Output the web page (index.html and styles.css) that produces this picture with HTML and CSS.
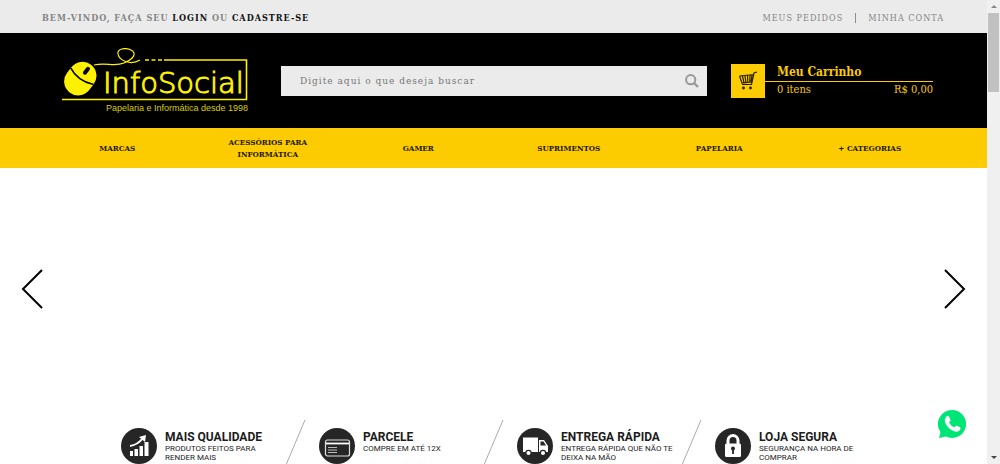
FILE: index.html
```html
<!DOCTYPE html>
<html lang="pt-BR">
<head>
<meta charset="utf-8">
<meta name="viewport" content="width=device-width, initial-scale=1">
<title>InfoSocial</title>
<link rel="stylesheet" href="styles.css">
</head>
<body>
<div class="topbar">
  <p class="welcome">BEM-VINDO, FAÇA SEU <a href="#">LOGIN</a> OU <a href="#">CADASTRE-SE</a></p>
  <nav class="account"><a href="#">MEUS PEDIDOS</a><span class="bar"></span><a href="#">MINHA CONTA</a></nav>
</div>
<header class="header">
  <a class="logo" href="#" aria-label="InfoSocial">
    <svg viewBox="0 0 188 66" width="188" height="66">
      <g fill="none" stroke="#fdf100" stroke-width="1.6">
        <path d="M0 51.500H184.500V12H102"/>
        <path d="M83 12h4M89.500 12h4M96 12h4"/>
        <path stroke-width="1.200" d="M32 17C44 14 52 19 62 15C72 11 75 5 69 2C63-1 55 1 56 6C57 12 68 18 78 12"/>
      </g>
      <g transform="rotate(38 18 31)">
        <rect x="4" y="13" width="28" height="35" rx="14" fill="#fdf100"/>
        <path d="M4 28Q17 34 32 27" fill="none" stroke="#000" stroke-width="1.600"/>
        <rect x="16" y="16" width="4" height="9" rx="2" fill="#000"/>
      </g>
      <text class="logo-name" x="41" y="45">InfoSocial</text>
      <text class="logo-tag" x="44" y="63">Papelaria e Informática desde 1998</text>
    </svg>
  </a>
  <form class="search" role="search">
    <input type="text" aria-label="Buscar" placeholder="Digite aqui o que deseja buscar">
    <button type="button" aria-label="Buscar">
      <svg viewBox="0 0 14 14" width="14" height="14" fill="none" stroke="#999" stroke-width="2"><circle cx="5.700" cy="5.700" r="4.600"/><path d="M9 9l4 4" stroke-width="2.400"/></svg>
    </button>
  </form>
  <a class="cart" href="#">
    <span class="cart-icon">
      <svg viewBox="0 0 20 20" width="20" height="20" fill="none" stroke="#2b2100" stroke-width="1.200"><path d="M19 1l-3 1-2.500 11.500H4M1.500 5L16 3.500M1.500 5L4 12L14 11M4.500 5l1.500 7M7 5l1 7M9.500 4.500l.3 7M12 4.500l-.3 7M14 4l-1 7"/><circle cx="5.500" cy="17" r=".8" fill="#2b2100"/><circle cx="12.500" cy="17" r=".8" fill="#2b2100"/></svg>
    </span>
    <span class="cart-info">
      <strong>Meu Carrinho</strong>
      <span class="cart-row"><span>0 itens</span><span>R$ 0,00</span></span>
    </span>
  </a>
</header>
<nav class="menu">
  <a href="#">MARCAS</a>
  <a href="#">ACESSÓRIOS PARA INFORMÁTICA</a>
  <a href="#">GAMER</a>
  <a href="#">SUPRIMENTOS</a>
  <a href="#">PAPELARIA</a>
  <a href="#">+ CATEGORIAS</a>
</nav>
<main>
  <section class="banner">
    <button type="button" aria-label="Anterior"><svg viewBox="0 0 22 40" width="22" height="40"><path d="M21 1L2 20l19 19"/></svg></button>
    <button type="button" aria-label="Próximo"><svg viewBox="0 0 22 40" width="22" height="40"><path d="M1 1l19 19L1 39"/></svg></button>
  </section>
  <section class="features">
    <article class="feature">
      <svg class="badge" viewBox="0 0 36 36" width="36" height="36"><circle cx="18" cy="18" r="18" fill="#262626"/><path d="M9 23h3v5H9zM13.500 21h3.500v7h-3.500zM18.500 18h3.500v10h-3.500zM23.500 14h4v14h-4z" fill="#fff"/><path d="M9 18C15 17 19 14 22 10" fill="none" stroke="#fff" stroke-width="2"/><path d="M18 9l7-2-1 7z" fill="#fff"/></svg>
      <div><h2>MAIS QUALIDADE</h2><p>PRODUTOS FEITOS PARA RENDER MAIS</p></div>
    </article>
    <svg class="slash" viewBox="0 0 23 52" width="23" height="52"><path d="M22 0L0 52"/></svg>
    <article class="feature">
      <svg class="badge" viewBox="0 0 36 36" width="36" height="36"><circle cx="18" cy="18" r="18" fill="#262626"/><rect x="6.500" y="12" width="24" height="16" rx="2" fill="none" stroke="#ddd" stroke-width="1.200"/><path d="M7 15.500h23" stroke="#fff" stroke-width="1.800"/><path d="M9 19.500h9M9 22h9M9 24.500h9" stroke="#bbb" stroke-width="1.200"/></svg>
      <div><h2>PARCELE</h2><p>COMPRE EM ATÉ 12X</p></div>
    </article>
    <svg class="slash" viewBox="0 0 23 52" width="23" height="52"><path d="M22 0L0 52"/></svg>
    <article class="feature">
      <svg class="badge" viewBox="0 0 36 36" width="36" height="36"><circle cx="18" cy="18" r="18" fill="#262626"/><path d="M6 9.500h15V24H6zM22 12h5l4 6v6h-9z" fill="#fff"/><path d="M23.500 13.500h3l2.500 4h-5.500z" fill="#262626"/><g fill="#fff" stroke="#262626" stroke-width="1.300"><circle cx="11.500" cy="25" r="2.700"/><circle cx="26" cy="25" r="2.700"/></g></svg>
      <div><h2>ENTREGA RÁPIDA</h2><p>ENTREGA RÁPIDA QUE NÃO TE DEIXA NA MÃO</p></div>
    </article>
    <svg class="slash" viewBox="0 0 23 52" width="23" height="52"><path d="M22 0L0 52"/></svg>
    <article class="feature">
      <svg class="badge" viewBox="0 0 36 36" width="36" height="36"><circle cx="18" cy="18" r="18" fill="#262626"/><rect x="10" y="15.500" width="16" height="13.500" rx="1.500" fill="#fff"/><path d="M13 16v-3.500a5 5 0 0 1 10 0V16" fill="none" stroke="#fff" stroke-width="3"/><circle cx="18" cy="20.500" r="2" fill="#262626"/><path d="M18 21v5" stroke="#262626" stroke-width="1.800"/></svg>
      <div><h2>LOJA SEGURA</h2><p>SEGURANÇA NA HORA DE COMPRAR</p></div>
    </article>
  </section>
</main>
<a class="whatsapp" href="#" aria-label="WhatsApp">
  <svg viewBox="0 0 28 28" width="28" height="28"><path d="M14 0a14 14 0 1 1-6 26.600L1 28l1.500-6A14 14 0 0 1 14 0z" fill="#00e676"/><path d="M8.500 6.500c1-1 2-1 2.600.2l1.300 3c.3.900-.1 1.500-1.400 2.800 1.200 2.300 3 3.900 5.400 5 1.200-1.600 1.700-2.100 2.600-1.700l2.900 1.500c1 .5.600 2.200-.4 3.300-1.300 1.300-3.500 1.500-6 .5-4-1.600-7-5-8.300-8.300-.9-2.600-.2-4.900 1.300-6.300z" fill="#fff"/></svg>
</a>
<div class="scrollbar" aria-hidden="true"><span class="up"></span><span class="thumb"></span><span class="down"></span></div>
</body>
</html>
```
FILE: styles.css
```css
* { box-sizing: border-box; }
body {
  margin: 0;
  padding-right: 13px;
  height: 100vh;
  overflow: hidden;
  background: #fff;
  font-family: "Roboto Slab", "DejaVu Serif Condensed", "DejaVu Serif", serif;
}
a { color: inherit; text-decoration: none; }
p, h2 { margin: 0; }
button { border: 0; padding: 0; background: none; display: flex; }
svg { display: block; flex: none; }

.topbar {
  display: flex;
  justify-content: space-between;
  align-items: center;
  height: 33px;
  padding: 2px 43px 0 42px;
  background: #ebebeb;
  color: #858585;
  font-size: 9px;
  letter-spacing: 1px;
}
.welcome { font-weight: bold; }
.welcome a { color: #111; }
.account { display: flex; align-items: center; gap: 12px; }
.bar { width: 1px; height: 10px; background: #8c8c8c; }

.header {
  display: flex;
  align-items: center;
  height: 95px;
  padding: 0 54px 0 62px;
  background: #000;
}
.logo { margin-right: 31px; }
.logo-name {
  font: 200 29px "DejaVu Sans Light", "DejaVu Sans", sans-serif;
  fill: #fdf100;
  stroke: #fdf100;
  stroke-width: 1px;
}
.logo-tag { font: 9px "Liberation Sans", sans-serif; fill: #d8cc00; }
.search {
  flex: 1;
  display: flex;
  align-items: center;
  height: 30px;
  padding: 0 8px 0 19px;
  background: #ebebeb;
}
.search input {
  flex: 1;
  min-width: 0;
  border: 0;
  padding: 0;
  background: none;
  font: inherit;
  font-size: 10px;
  letter-spacing: 1px;
}
.search input::placeholder { color: #777; opacity: 1; }
.cart { display: flex; width: 202px; margin-left: 24px; color: #fccb00; }
.cart-icon {
  display: grid;
  place-items: center;
  width: 34px;
  height: 34px;
  background: #fccb00;
}
.cart-info { flex: 1; font-size: 11px; line-height: 16px; }
.cart-info strong {
  display: block;
  padding-left: 12px;
  border-bottom: 1px solid #fccb00;
  font-size: 12px;
  line-height: 17px;
}
.cart-row { display: flex; justify-content: space-between; padding-left: 12px; }

.menu {
  display: grid;
  grid-template-columns: repeat(6, 1fr);
  align-items: center;
  height: 40px;
  padding: 0 42px;
  background: #fccb00;
  color: #1c1700;
  font-size: 8px;
  font-weight: bold;
  line-height: 12px;
  text-align: center;
}
.menu a { padding: 0 32px; }

.banner {
  display: flex;
  justify-content: space-between;
  align-items: center;
  height: 241px;
  padding: 0 21px;
}
.banner path { fill: none; stroke: #000; stroke-width: 2; }

.features {
  display: flex;
  padding: 11px 110px 0 121px;
  font-family: Roboto, sans-serif;
  color: #1c1c1c;
}
.feature { display: flex; flex: 1 1 0; gap: 8px; min-width: 0; padding-top: 8px; }
.feature h2 { font-size: 12px; line-height: 14px; margin-top: 2px; white-space: nowrap; }
.feature p { max-width: 112px; font-size: 8px; line-height: 9px; }
.slash { margin-right: 13px; }
.slash path { fill: none; stroke: #aaa; stroke-width: 1; }

.whatsapp { position: fixed; right: 34px; bottom: 26px; }
.scrollbar {
  position: fixed;
  top: 0;
  right: 0;
  bottom: 0;
  display: flex;
  flex-direction: column;
  align-items: center;
  width: 13px;
  padding: 5px 0;
  background: #f0f0f0;
}
.up, .down { border: 3px solid transparent; }
.up { border-top: 0; border-bottom-color: #888; }
.down { border-bottom: 0; border-top-color: #444; margin-top: auto; }
.thumb { width: 11px; height: 79px; margin-top: 5px; background: #c1c1c1; }
```
